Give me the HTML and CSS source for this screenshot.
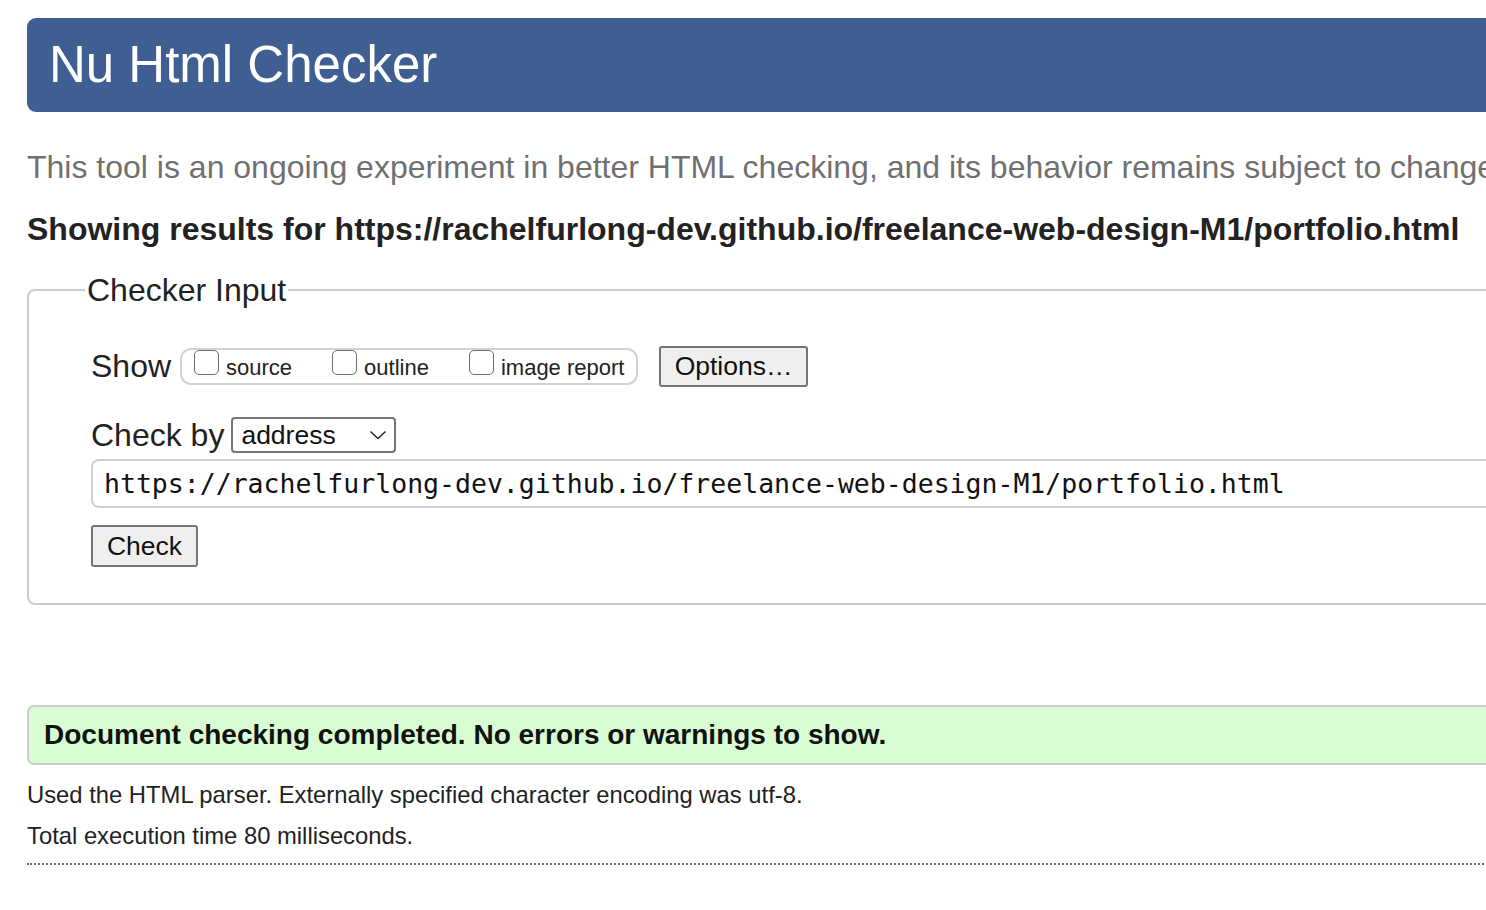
FILE: index.html
```html
<!DOCTYPE html>
<html lang="en">
<head>
<meta charset="utf-8">
<title>Showing results for https://rachelfurlong-dev.github.io/freelance-web-design-M1/portfolio.html - Nu Html Checker</title>
<link rel="stylesheet" href="styles.css">
</head>
<body>
<div class="page">
  <h1 class="banner">Nu Html Checker</h1>
  <p class="intro">This tool is an ongoing experiment in better HTML checking, and its behavior remains subject to change</p>
  <h2 class="results-for">Showing results for https://rachelfurlong-dev.github.io/freelance-web-design-M1/portfolio.html</h2>

  <fieldset class="checker">
    <legend class="legend">Checker Input</legend>
    <div class="row show-row">
      <span class="label">Show</span>
      <span class="options-group">
        <label class="opt"><input type="checkbox" class="cb">source</label>
        <label class="opt"><input type="checkbox" class="cb">outline</label>
        <label class="opt"><input type="checkbox" class="cb">image report</label>
      </span>
      <button class="btn btn-options" type="button">Options…</button>
    </div>
    <div class="row checkby-row">
      <span class="label">Check by</span>
      <span class="select">
        <span class="select-text">address</span>
        <svg class="chev" width="18" height="10" viewBox="0 0 18 10"><path d="M1.5 1.5 L9 8.5 L16.5 1.5" fill="none" stroke="#222" stroke-width="1.4"/></svg>
      </span>
    </div>
    <div class="url">https://rachelfurlong-dev.github.io/freelance-web-design-M1/portfolio.html</div>
    <div class="row">
      <button class="btn btn-check" type="button">Check</button>
    </div>
  </fieldset>

  <div class="success">Document checking completed. No errors or warnings to show.</div>
  <p class="details">Used the HTML parser. Externally specified character encoding was utf-8.</p>
  <p class="details">Total execution time 80 milliseconds.</p>
  <hr class="rule">
</div>
</body>
</html>
```

FILE: styles.css
```css
html, body {
  margin: 0;
  padding: 0;
  background: #fff;
  overflow: hidden;
}
body {
  font-family: "Liberation Sans", Arial, sans-serif;
  color: #222;
  width: 1486px;
  height: 910px;
}
.page {
  margin-left: 27px;
  padding-top: 18px;
  width: 1620px;
}
.banner {
  margin: 0;
  background: #3f5e91;
  color: #fff;
  font-weight: normal;
  font-size: 51px;
  line-height: 94px;
  height: 94px;
  padding-left: 22px;
  border-radius: 9px;
}
.intro {
  margin: 37px 0 0 0;
  font-size: 32px;
  line-height: 36px;
  color: #707070;
  white-space: nowrap;
}
.results-for {
  margin: 26px 0 0 0;
  font-size: 32px;
  line-height: 36px;
  font-weight: bold;
  color: #222;
  white-space: nowrap;
}
.checker {
  margin: 26px 0 0 0;
  border: 2px solid #cccccc;
  border-radius: 8px;
  padding: 0 0 36px 62px;
  min-width: 0;
}
.legend {
  font-size: 32px;
  line-height: 34px;
  padding: 0 2px;
  margin-left: -6px;
  color: #222;
}
.row {
  display: flex;
  align-items: center;
}
.label {
  font-size: 32px;
  color: #222;
}
.show-row {
  margin-top: 38px;
  height: 42px;
}
.options-group {
  display: flex;
  align-items: center;
  margin-left: 9px;
  height: 37px;
  width: 458px;
  border: 2px solid #d2d2d2;
  border-radius: 11px;
  box-sizing: border-box;
  padding-left: 12px;
}
.opt {
  display: flex;
  align-items: center;
  font-size: 22px;
  color: #222;
  margin-right: 40px;
  padding-top: 3px;
}
.opt:last-child { margin-right: 0; }
.cb {
  appearance: none;
  -webkit-appearance: none;
  width: 25px;
  height: 25px;
  margin: -10px 7px 0 0;
  border: 1.5px solid #6e6e6e;
  border-radius: 5px;
  background: #fff;
  box-sizing: border-box;
}
.btn {
  font-family: "Liberation Sans", Arial, sans-serif;
  font-size: 26.5px;
  color: #111;
  background: #efefef;
  border: 2px solid #767676;
  border-radius: 3px;
  padding: 0;
  box-sizing: border-box;
}
.btn-options {
  margin-left: 21px;
  width: 149px;
  height: 41px;
}
.checkby-row {
  margin-top: 30px;
  height: 36px;
}
.select {
  margin-left: 7px;
  width: 165px;
  height: 36px;
  box-sizing: border-box;
  border: 2px solid #767676;
  border-radius: 4px;
  display: flex;
  align-items: center;
  justify-content: space-between;
  padding: 0 7px 0 8px;
  background: #fff;
}
.select-text {
  font-size: 26.5px;
  color: #111;
}
.url {
  margin-top: 6px;
  height: 49px;
  box-sizing: border-box;
  border: 2px solid #d0d0d0;
  border-right: none;
  border-radius: 8px 0 0 8px;
  font-family: "DejaVu Sans Mono", monospace;
  font-size: 26.5px;
  line-height: 45px;
  padding-left: 11px;
  color: #111;
  white-space: nowrap;
}
.btn-check {
  margin-top: 17px;
  width: 107px;
  height: 42px;
}
.success {
  margin-top: 100px;
  height: 60px;
  box-sizing: border-box;
  background: #d9fdd3;
  border: 2px solid #cccccc;
  border-radius: 7px;
  padding-left: 15px;
  font-size: 28px;
  line-height: 56px;
  font-weight: bold;
  color: #111;
  white-space: nowrap;
}
.details {
  margin: 0;
  font-size: 23.8px;
  line-height: 41px;
  color: #222;
}
.success + .details {
  margin-top: 9px;
}
.rule {
  margin: 7px 0 0 0;
  border: none;
  border-top: 2px dotted #666;
  height: 0;
}
```
